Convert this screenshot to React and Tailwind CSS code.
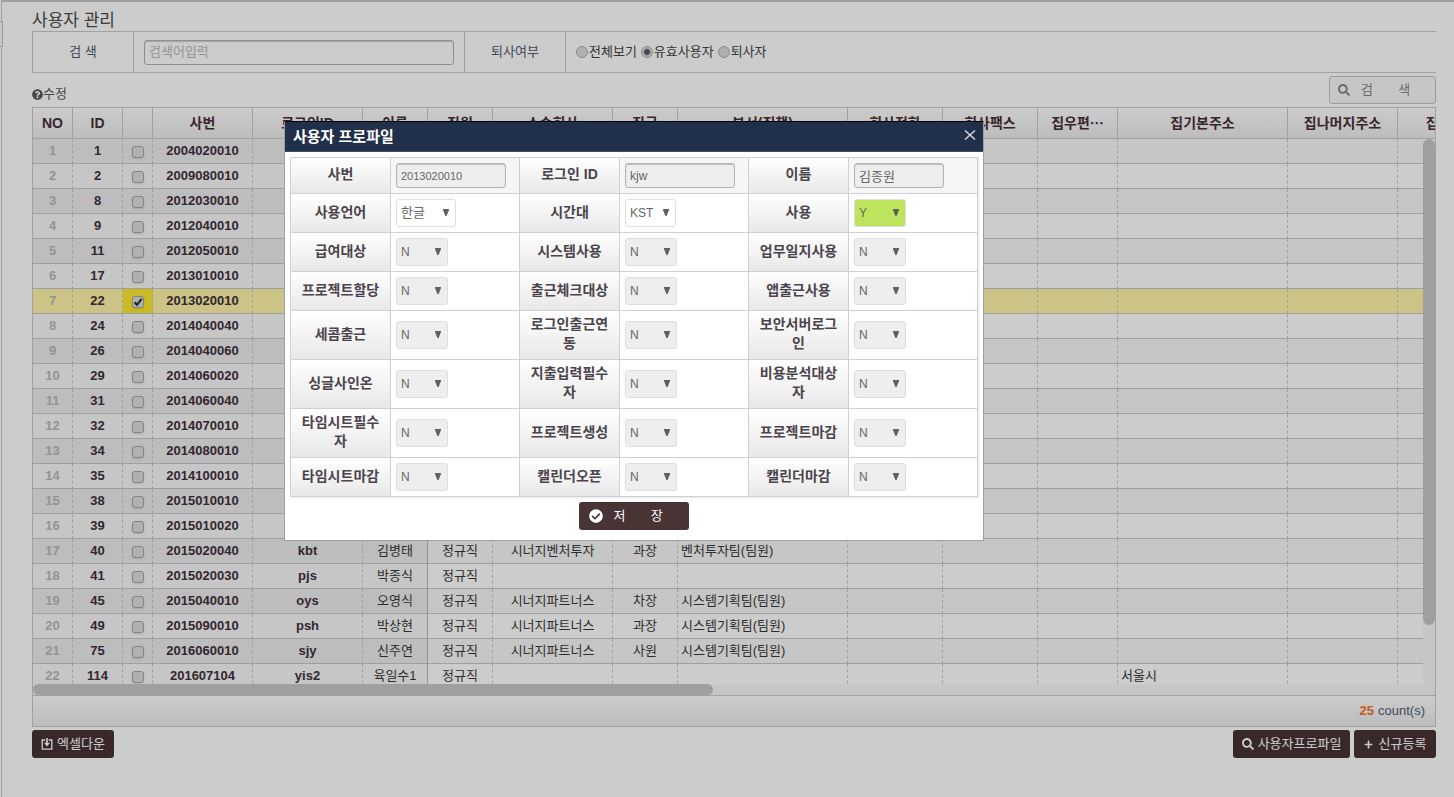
import React from "react";
import { FaQuestionCircle, FaSearch, FaPlus, FaCheckCircle } from "react-icons/fa";

const COLUMNS = [
  ["NO", 40],
  ["ID", 50],
  ["", 30],
  ["사번", 100],
  ["로그인ID", 110],
  ["이름", 65],
  ["직원", 65],
  ["소속회사", 120],
  ["직급", 65],
  ["부서(직책)", 170],
  ["회사전화", 95],
  ["회사팩스", 95],
  ["집우편⋯", 80],
  ["집기본주소", 170],
  ["집나머지주소", 110],
  ["집전화", 95],
];

const ROWS = [
  ["1", "2004020010"],
  ["2", "2009080010"],
  ["8", "2012030010"],
  ["9", "2012040010"],
  ["11", "2012050010"],
  ["17", "2013010010"],
  ["22", "2013020010"],
  ["24", "2014040040"],
  ["26", "2014040060"],
  ["29", "2014060020"],
  ["31", "2014060040"],
  ["32", "2014070010"],
  ["34", "2014080010"],
  ["35", "2014100010"],
  ["38", "2015010010"],
  ["39", "2015010020"],
  ["40", "2015020040", "kbt", "김병태", "정규직", "시너지벤처투자", "과장", "벤처투자팀(팀원)"],
  ["41", "2015020030", "pjs", "박종식", "정규직"],
  ["45", "2015040010", "oys", "오영식", "정규직", "시너지파트너스", "차장", "시스템기획팀(팀원)"],
  ["49", "2015090010", "psh", "박상현", "정규직", "시너지파트너스", "과장", "시스템기획팀(팀원)"],
  ["75", "2016060010", "sjy", "신주연", "정규직", "시너지파트너스", "사원", "시스템기획팀(팀원)"],
  ["114", "201607104", "yis2", "육일수1", "정규직", "", "", "", "", "", "", "서울시"],
];

const SELECTED = 6;

function Tick({ checked, label }) {
  return (
    <span className="relative top-px mx-auto block size-3">
      <input
        type="checkbox"
        aria-label={label}
        defaultChecked={checked}
        className="block size-3 appearance-none rounded-[3px] border border-[#a6a6a6] bg-[#dedede] shadow-sm"
      />
      {checked && (
        <svg viewBox="0 0 12 12" className="pointer-events-none absolute inset-0 size-3">
          <path d="M2.6 6.2 L5 8.8 L9.6 2.8" fill="none" stroke="#333" strokeWidth="2.2" />
        </svg>
      )}
    </span>
  );
}

function UserGrid() {
  return (
    <section className="relative border border-[#cacaca] bg-[#f8f8f8]">
      <div className="h-[577px] overflow-hidden">
        <table className="w-[1460px] table-fixed border-separate border-spacing-0 text-[13px] leading-4">
          <colgroup>
            {COLUMNS.map(([, width], i) => (
              <col key={i} style={{ width }} />
            ))}
          </colgroup>
          <thead>
            <tr>
              {COLUMNS.map(([name], i) => (
                <th
                  key={i}
                  scope="col"
                  className={
                    "h-[31px] whitespace-nowrap border-b border-r border-[#cacaca] bg-linear-to-b from-white to-[#ececec] p-0 text-[14px] font-bold text-[#4a2f38]" +
                    (i === 5 ? " shadow-[1px_0_1px_#00000022]" : "")
                  }
                >
                  {name}
                </th>
              ))}
            </tr>
          </thead>
          <tbody>
            {ROWS.map((row, r) => {
              const selected = r === SELECTED;
              const cells = [String(r + 1), row[0], null, ...row.slice(1)];
              return (
                <tr key={r}>
                  {COLUMNS.map((_, c) => {
                    let bg;
                    if (selected) bg = c === 2 ? "bg-[#fdea30]" : "bg-[#fef5a8]";
                    else if (c < 6) bg = r % 2 ? "bg-[#f8f8f8]" : "bg-[#ededed]";
                    else bg = r % 2 ? "bg-white" : "bg-[#f8f8f8]";
                    let text = "text-center text-[#383838]";
                    if (c === 0) text = "text-center font-bold text-[#b8b9b4]";
                    else if (c < 5) text = "text-center font-bold text-[#40303c]";
                    else if (c === 9 || c > 11) text = "text-left text-[#383838]";
                    const edge = c === 5 ? "border-r-[#b8b8b8]" : "[border-right-style:dashed] border-r-[#c8c8c8]";
                    return (
                      <td
                        key={c}
                        className={`h-[25px] whitespace-nowrap border-b border-r border-b-[#c7c7c7] px-[3px] py-0 ${edge} ${bg} ${text}`}
                      >
                        {c === 2 ? <Tick checked={selected} label={`${row[1]} 선택`} /> : cells[c]}
                      </td>
                    );
                  })}
                </tr>
              );
            })}
          </tbody>
        </table>
      </div>
      <div className="h-[10px]" />
      <div className="absolute right-0 top-[31px] h-[556px] w-3 bg-[#f8f8f8]">
        <div className="h-[486px] rounded-md bg-[#c7c7c7]" />
      </div>
      <div className="absolute left-0 top-[576px] h-[11px] w-[680px] rounded-md bg-[#c7c7c7]" />
      <footer className="flex h-[31px] items-center justify-end gap-1 border-t border-[#cacaca] bg-linear-to-b from-white to-[#ececec] pr-[10px] text-[13px] text-[#535c74]">
        <b className="text-[#f87126]">25</b> count(s)
      </footer>
    </section>
  );
}

function DarkButton({ className = "", children }) {
  return (
    <button
      type="button"
      className={`flex h-7 items-center justify-center whitespace-pre rounded-[3px] bg-[#483335] text-[13px] text-white ${className}`}
    >
      {children}
    </button>
  );
}

function SearchForm() {
  return (
    <form className="flex h-[42px] items-stretch border-y border-l border-[#cacaca] text-[13px] text-[#444]">
      <label htmlFor="keyword" className="flex w-[101px] items-center justify-center border-r border-[#cacaca] text-[#4f5870]">
        검 색
      </label>
      <div className="flex w-[331px] items-center border-r border-[#cacaca] pl-[10px]">
        <input
          id="keyword"
          placeholder="검색어입력"
          className="h-[25px] w-[310px] rounded-[3px] border border-[#b4b4b4] bg-white px-1 pb-0.5 shadow-[inset_0_1px_1px_#00000033] placeholder:text-[#bababa]"
        />
      </div>
      <div className="flex w-[101px] items-center justify-center border-r border-[#cacaca] text-[#4f5870]">퇴사여부</div>
      <div className="flex items-center gap-1 pl-[10px]">
        {["전체보기", "유효사용자", "퇴사자"].map((name, i) => (
          <label key={name} className="flex items-center gap-px">
            <input
              type="radio"
              name="status"
              defaultChecked={i === 1}
              className="size-3 appearance-none rounded-full border border-[#b0b0b0] bg-[#dcdcdc] checked:bg-[radial-gradient(circle,#56505a_0_2px,#dcdcdc_4px)]"
            />
            {name}
          </label>
        ))}
      </div>
    </form>
  );
}

const PROFILE = [
  ["사용언어", "시간대", "사용"],
  ["급여대상", "시스템사용", "업무일지사용"],
  ["프로젝트할당", "출근체크대상", "앱출근사용"],
  ["세콤출근", "로그인출근연동", "보안서버로그인"],
  ["싱글사인온", "지출입력필수자", "비용분석대상자"],
  ["타임시트필수자", "프로젝트생성", "프로젝트마감"],
  ["타임시트마감", "캘린더오픈", "캘린더마감"],
];
const FIRST_VALUES = ["한글", "KST", "Y"];
const FIRST_STYLES = [
  "w-[60px] bg-white text-[13px]",
  "w-[51px] bg-white text-xs",
  "w-[52px] bg-[#bde45c] text-xs",
];

function FieldHead({ id, children }) {
  return (
    <th
      scope="row"
      className="w-[100px] border-b border-r border-[#d0d0d0] bg-linear-to-b from-white to-[#e8e8e8] px-[6px] pb-0.5 pt-0 text-center text-[14px] font-bold leading-[19px] text-[#4b444c]"
    >
      <label htmlFor={id}>{children}</label>
    </th>
  );
}

function Choice({ id, value, className }) {
  return (
    <span className="relative inline-block align-middle">
      <select
        id={id}
        defaultValue={value}
        className={`block h-7 appearance-none rounded-[3px] border border-[#dedede] pl-1 text-[#666] ${className}`}
      >
        <option>{value}</option>
      </select>
      <svg viewBox="0 0 6 7" className="pointer-events-none absolute right-[7px] top-[10px] h-[7px] w-[6px]">
        <path d="M0 0H6V1L3.6 7H2.4L0 1Z" fill="#606060" />
      </svg>
    </span>
  );
}

function ProfileDialog() {
  const inputs = [
    ["사번", "2013020010", "w-[110px] text-[11px]"],
    ["로그인 ID", "kjw", "w-[110px] text-xs"],
    ["이름", "김종원", "w-[90px] text-[13px]"],
  ];
  return (
    <div
      role="dialog"
      aria-labelledby="dialog-title"
      className="absolute left-[284px] top-[121px] w-[700px] border border-[#a0a0a0] border-t-black bg-white"
    >
      <header className="flex h-[30px] items-start justify-between border-b border-[#3f4a62] bg-[#20304b] pl-2 pr-[7px] pt-[7px]">
        <h2 id="dialog-title" className="text-[15px] font-bold leading-4 text-white">
          사용자 프로파일
        </h2>
        <button type="button" aria-label="닫기" className="flex size-3 items-center justify-center">
          <svg viewBox="0 0 12 12" className="size-3" fill="none" stroke="#d5d8de" strokeWidth="1.5">
            <path d="M1 1.5 L11 10.5 M11 1.5 L1 10.5" />
          </svg>
        </button>
      </header>
      <form className="p-[5px] pb-[10px]">
        <table className="w-full table-fixed border-separate border-spacing-0 border-l border-t border-[#d0d0d0] shadow-[1px_1px_2px_#0000001a]">
          <colgroup>
            {[0, 1, 2].map((i) => (
              <React.Fragment key={i}>
                <col className="w-[100px]" />
                <col />
              </React.Fragment>
            ))}
          </colgroup>
          <tbody>
            <tr className="h-9">
              {inputs.map(([name, value, style], i) => (
                <React.Fragment key={name}>
                  <FieldHead id={`input-${i}`}>{name}</FieldHead>
                  <td className="border-b border-r border-[#d0d0d0] bg-[#f6f6f6] px-[5px] py-0">
                    <input
                      id={`input-${i}`}
                      readOnly
                      value={value}
                      className={`block h-[25px] rounded-[3px] border border-[#b0b4b4] bg-[#eee] px-1 text-[#666] shadow-[inset_0_1px_1px_#00000033] ${style}`}
                    />
                  </td>
                </React.Fragment>
              ))}
            </tr>
            {PROFILE.map((names, r) => (
              <tr key={r} className={r >= 3 && r <= 5 ? "h-[49px]" : "h-[39px]"}>
                {names.map((name, c) => (
                  <React.Fragment key={name}>
                    <FieldHead id={`field-${r}-${c}`}>{name}</FieldHead>
                    <td className="border-b border-r border-[#d0d0d0] bg-white px-[5px] py-0 leading-4">
                      <Choice
                        id={`field-${r}-${c}`}
                        value={r === 0 ? FIRST_VALUES[c] : "N"}
                        className={r === 0 ? FIRST_STYLES[c] : "w-[52px] bg-[#eee] text-xs"}
                      />
                    </td>
                  </React.Fragment>
                ))}
              </tr>
            ))}
          </tbody>
        </table>
        <div className="mt-[5px] flex justify-center">
          <DarkButton className="w-[110px] gap-[10px] pr-4">
            <FaCheckCircle size={14} />
            {"저       장"}
          </DarkButton>
        </div>
      </form>
    </div>
  );
}

export default function App() {
  return (
    <div
      lang="ko"
      className="relative min-h-screen overflow-hidden bg-white [font-family:'Liberation_Sans','Noto_Sans_CJK_KR',sans-serif]"
    >
      <main className="ml-px min-h-screen border-l border-t-2 border-l-[#cacaca] border-t-[#c8c8c8] pl-[30px] pr-[18px]">
        <h1 className="flex h-[29px] items-center pt-2 text-[17px] leading-5 text-[#4c4c4c]">사용자 관리</h1>
        <SearchForm />
        <div className="flex h-[34px] items-start justify-between pt-[3px]">
          <p className="flex h-9 items-center text-[13px] text-[#5a5a5a]">
            <FaQuestionCircle size={11} />
            수정
          </p>
          <button
            type="button"
            className="flex h-7 w-[107px] items-center gap-[11px] whitespace-pre rounded-[3px] border border-[#c4c4c4] bg-[#f8f8f8] pl-2 text-[13px] text-[#868686]"
          >
            <FaSearch size={12} />
            {"검       색"}
          </button>
        </div>
        <UserGrid />
        <div className="mt-[3px] flex gap-1">
          <DarkButton className="mr-auto w-[82px] gap-1">
            <svg viewBox="0 0 12 12" className="size-3" fill="none" stroke="currentColor" strokeWidth="1.3">
              <path d="M4.2 2H1.2V11.2H10.8V2H7.8" />
              <path d="M6 0V6" strokeWidth="1.6" />
              <path d="M3 4.8H9L6 8.6Z" fill="currentColor" stroke="none" />
            </svg>
            엑셀다운
          </DarkButton>
          <DarkButton className="w-[117px] gap-1">
            <FaSearch size={12} />
            사용자프로파일
          </DarkButton>
          <DarkButton className="w-[82px] gap-[6px]">
            <FaPlus size={9} />
            신규등록
          </DarkButton>
        </div>
      </main>
      <div className="absolute left-0 top-[21px] h-[26px] w-[3px] border-y border-r border-[#c4c4c4] bg-[#f8f8f8]" />
      <div className="absolute inset-0 bg-black/20" />
      <ProfileDialog />
    </div>
  );
}
